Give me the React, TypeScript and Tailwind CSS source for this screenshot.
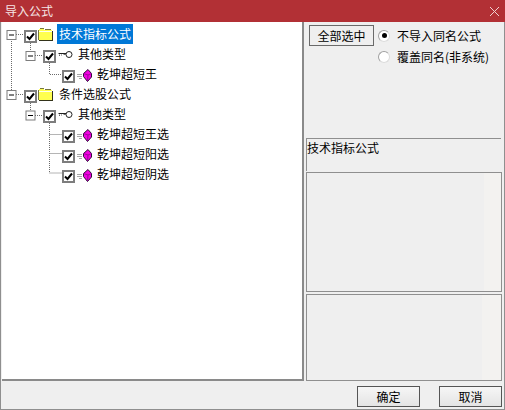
import { ReactNode } from "react";

const FONT = "font-['Noto_Sans_CJK_SC','Liberation_Sans',sans-serif]";

function Check() {
  return (
    <span className="flex w-[13px] h-[13px] shrink-0 items-center justify-center border-2 border-[#7d7d7d] bg-white">
      <svg width="9" height="9" viewBox="0 0 9 9">
        <path d="M1 4.5 L3.5 7 L8 1.5" fill="none" stroke="#000" strokeWidth="2" />
      </svg>
    </span>
  );
}

function Folder() {
  return (
    <svg width="15" height="13" viewBox="0 0 15 13" className="shrink-0" shapeRendering="crispEdges">
      <path d="M1 1 H6 V2 H14 V12 H1 Z" fill="#ffff50" />
      <path d="M2 0.5 H6 M7 1.5 H13 M0.5 2 V12" stroke="#77773f" fill="none" />
      <path d="M1 12.5 H15 M14.5 3 V13" stroke="#33331a" fill="none" />
      <path d="M1 3.5 H14" stroke="#fffff0" />
    </svg>
  );
}

function KeyIcon() {
  return (
    <svg width="15" height="9" viewBox="0 0 15 9" className="shrink-0">
      <circle cx="11" cy="4.5" r="3" fill="#fff" stroke="#222" />
      <path d="M0.5 3.5 H8" stroke="#222" />
      <path d="M1.5 4.5 V6 M3.5 4.5 V5.5 M5.5 4.5 H8" stroke="#666" />
    </svg>
  );
}

function GemIcon() {
  return (
    <svg width="15" height="13" viewBox="0 0 15 13" className="shrink-0">
      <path d="M0 5.5 H5 M0 7.5 H5 M2 9.5 H5" stroke="#a8a8a8" />
      <path d="M11 0.5 L14.5 4.5 V8 L10.5 12.5 L6.5 7.5 V4.5 Z" fill="#f000e0" stroke="#30103a" />
      <path d="M6.5 4.5 L11 6 L14.5 4.5 M11 6 L10.5 12" fill="none" stroke="#a000a0" />
    </svg>
  );
}

function TreeRow({ indent, icon, label, selected }: { indent: string; icon: ReactNode; label: string; selected?: boolean }) {
  return (
    <div className={`flex h-[20px] items-center ${indent}`}>
      <Check />
      {icon}
      <span
        className={`mb-1 h-[20px] px-[2px] text-[12px] leading-[20px] whitespace-nowrap ${
          selected ? "bg-[#0078d7] text-white" : "text-black"
        }`}
      >
        {label}
      </span>
    </div>
  );
}

function Guides() {
  const dotted = { stroke: "#6a6a6a", strokeDasharray: "1 1", fill: "none" };
  const expanders = [
    [11.5, 34.5],
    [30.5, 55.5],
    [11.5, 94.5],
    [30.5, 115],
  ];
  return (
    <svg width="100" height="200" className="absolute left-0 top-0">
      <g transform="translate(-2,-22)">
        <path d="M11.5 39 V90 M30.5 43 V51 M49.5 63 V74.5 H62 M30.5 103 V111 M49.5 123 V173 H62 M49.5 134.5 H62 M49.5 153.5 H62 M16 34.5 H24 M35 55.5 H43 M16 94.5 H24 M35 115.5 H43" {...dotted} />
        {expanders.map(([x, y]) => (
          <g key={`${x}-${y}`}>
            <rect x={x - 4.5} y={y - 4} width="9" height="9" fill="#fff" stroke="#7d7d7d" />
            <path d={`M${x - 2.5} ${y + 0.5} H${x + 2.5}`} stroke="#000" />
          </g>
        ))}
      </g>
    </svg>
  );
}

function FooterButton({ label }: { label: string }) {
  return (
    <button className="w-[63px] h-[21px] border border-[#555] bg-gradient-to-b from-[#f6f6f6] to-[#e4e4e4] text-[12px] leading-none text-black">
      {label}
    </button>
  );
}

function Radio({ on, label }: { on?: boolean; label: string }) {
  return (
    <div className="flex h-[21px] items-center gap-[7px]">
      <span className="flex h-[12px] w-[12px] items-center justify-center rounded-full border border-[#a0a0a0] border-b-[#dcdcdc] border-r-[#dcdcdc] bg-white">
        {on && <span className="h-[5px] w-[5px] rounded-full bg-black" />}
      </span>
      <span className="text-[12px] leading-none text-black whitespace-nowrap">{label}</span>
    </div>
  );
}

export default function App() {
  return (
    <div className={`flex h-[410px] w-[505px] flex-col overflow-hidden bg-[#efefef] ${FONT}`}>
      <div className="flex h-[22px] shrink-0 items-center justify-between bg-[#b23035] pl-[5px] pr-[4px]">
        <span className="text-[12px] leading-none text-[#f5e6e6]">导入公式</span>
        <svg width="11" height="11" viewBox="0 0 11 11" className="mr-[1px]">
          <path d="M1 1 L10 10 M10 1 L1 10" stroke="#f0d0d0" strokeWidth="1" />
        </svg>
      </div>

      <div className="flex min-h-0 flex-1 flex-col border-x border-b border-[#8f8f8f]">
        <div className="flex h-[359px]">
          <div className="relative ml-[1px] w-[302px] shrink-0 border-r-2 border-b-2 border-[#8a8a8a] bg-white pt-[4px]">
            <Guides />
            <div className="relative">
              <TreeRow indent="pl-[22px]" icon={<span className="mb-1 ml-[1px] mr-[4px]"><Folder /></span>} label="技术指标公式" selected />
              <TreeRow indent="pl-[41px]" icon={<span className="mb-1 ml-[2px] mr-[3px] flex"><KeyIcon /></span>} label="其他类型" />
              <TreeRow indent="pl-[60px]" icon={<span className="ml-[2px] mb-[1px] mr-[3px] flex"><GemIcon /></span>} label="乾坤超短王" />
              <TreeRow indent="pl-[22px]" icon={<span className="mb-1 ml-[1px] mr-[4px]"><Folder /></span>} label="条件选股公式" />
              <TreeRow indent="pl-[41px]" icon={<span className="mb-1 ml-[2px] mr-[3px] flex"><KeyIcon /></span>} label="其他类型" />
              <TreeRow indent="pl-[60px]" icon={<span className="ml-[2px] mb-[1px] mr-[3px] flex"><GemIcon /></span>} label="乾坤超短王选" />
              <TreeRow indent="pl-[60px]" icon={<span className="ml-[2px] mb-[1px] mr-[3px] flex"><GemIcon /></span>} label="乾坤超短阳选" />
              <TreeRow indent="pl-[60px]" icon={<span className="ml-[2px] mb-[1px] mr-[3px] flex"><GemIcon /></span>} label="乾坤超短阴选" />
            </div>
          </div>

          <div className="flex min-w-0 flex-1 flex-col pl-[2px] pr-[2px]">
            <div className="flex h-[116px] shrink-0 items-start gap-[4px] pl-[3px] pt-[3px]">
              <button className="h-[21px] w-[65px] shrink-0 border border-[#6a6a6a] bg-[#efefef] text-[12px] leading-none text-black">
                全部选中
              </button>
              <div className="flex flex-col">
                <Radio on label="不导入同名公式" />
                <Radio label="覆盖同名(非系统)" />
              </div>
            </div>
            <div className="h-[33px] w-[195px] shrink-0 border-t border-l border-[#8f8f8f] border-r-white border-b-white text-[12px] leading-[17px] text-black">
              技术指标公式
            </div>
            <div className="mt-[1px] flex h-[120px] shrink-0 justify-end border border-[#8f8f8f] bg-[#efefef]">
              <div className="w-[17px] bg-[#f3f2f0]" />
            </div>
            <div className="mt-[2px] flex h-[87px] shrink-0 justify-end border border-[#8f8f8f] bg-[#efefef]">
              <div className="w-[19px] bg-[#f3f2f0]" />
            </div>
          </div>
        </div>

        <div className="flex flex-1 items-start justify-end gap-[19px] pr-[2px] pt-[5px]">
          <FooterButton label="确定" />
          <FooterButton label="取消" />
        </div>
      </div>
    </div>
  );
}
